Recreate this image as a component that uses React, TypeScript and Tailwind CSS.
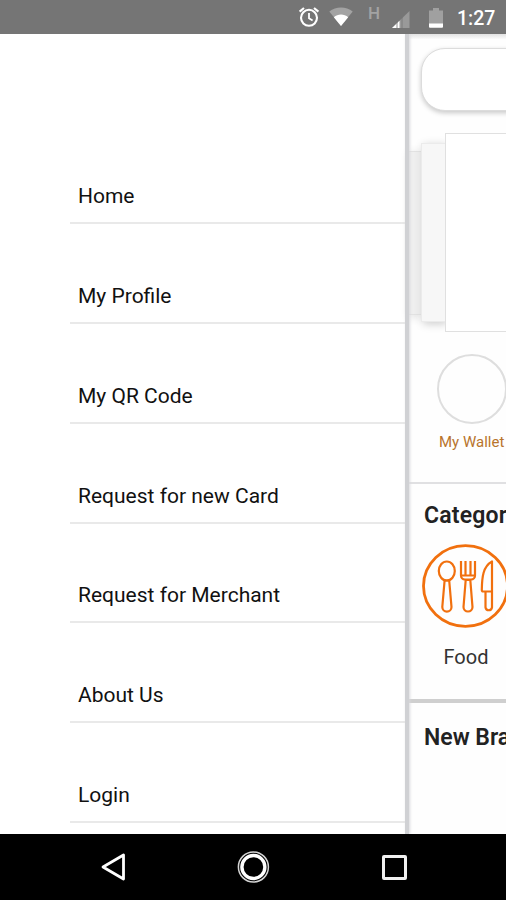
const menuItems = [
  'Home',
  'My Profile',
  'My QR Code',
  'Request for new Card',
  'Request for Merchant',
  'About Us',
  'Login',
];

function StatusBar() {
  return (
    <header className="flex h-[34px] shrink-0 items-center bg-[#757575] pl-[298px]">
      {/* alarm */}
      <svg width="22" height="22" viewBox="0 0 22 22" fill="none" stroke="#fff" className="shrink-0">
        <circle cx="11" cy="11.8" r="8" strokeWidth="2.1" />
        <path d="M11 7v5.3l3.6 2.2" strokeWidth="1.8" />
        <path d="M1.6 5.6 6 2M20.4 5.6 16 2" strokeWidth="2.2" />
      </svg>
      {/* wifi */}
      <svg width="24" height="20" viewBox="0 0 24 20" className="ml-[9px] shrink-0">
        <path d="M.3 4.6C3.7 1.9 7.7.6 12 .6s8.300 1.300 11.700 4L12 19z" fill="#a3a3a3" />
        <path d="M4.800 10.200C6.900 8.500 9.300 7.600 12 7.600s5.100.9 7.200 2.600L12 19z" fill="#fff" />
      </svg>
      <span className="-mt-[8px] ml-[15px] w-[14px] shrink-0 text-[17px] leading-none font-medium text-[#a3a3a3]">H</span>
      {/* mobile signal */}
      <svg width="18" height="18" viewBox="0 0 18 18" className="mt-[5px] ml-[10px] shrink-0">
        <path d="M0 17 17.500 0v17z" fill="#999" />
        <path d="M0 17 7.500 9.700V17z" fill="#fff" />
        <path d="M5 10v8M10 6v12" stroke="#757575" strokeWidth=".8" />
      </svg>
      {/* battery */}
      <svg width="16" height="20" viewBox="0 0 16 20" className="mt-[1px] ml-[18px] shrink-0">
        <path d="M1 2.500h4V0h6v2.500h4V16H1z" fill="#a0a0a0" />
        <path d="M1 15.500h14v3.300a1 1 0 0 1-1 1H2a1 1 0 0 1-1-1z" fill="#fff" />
      </svg>
      <span className="mt-[3px] ml-[13px] text-[19.500px] leading-none font-medium text-white">1:27</span>
    </header>
  );
}

function Drawer() {
  return (
    <nav className="w-[405px] shrink-0 bg-white pt-[90.200px] pl-[70px]">
      <ul>
        {menuItems.map((item) => (
          <li
            key={item}
            className="flex h-[99.85px] items-end border-b-2 border-[#e9e9e9] pb-[14px] pl-2 text-[21px] leading-[24px] text-[#111]"
          >
            {item}
          </li>
        ))}
      </ul>
    </nav>
  );
}

function FoodIcon() {
  return (
    <svg width="86" height="84" viewBox="0 0 86 84" fill="none" stroke="#f1700e" strokeWidth="2.200" strokeLinejoin="round" className="shrink-0">
      <ellipse cx="43.500" cy="42" rx="42" ry="40.300" strokeWidth="2.800" />
      {/* spoon */}
      <ellipse cx="24.800" cy="27" rx="8" ry="9.500" />
      <path d="M22.600 36.500h4.600l2.300 26.500a4.500 4.500 0 0 1-9.200 0z" />
      {/* fork */}
      <path d="M39 17v14.500c0 2 1.500 4 4 4h6c2.500 0 4-2 4-4V17M43.500 17v14M48.500 17v14M39 31.500h14" />
      <path d="M43.700 36h4.600l2.200 27a4.500 4.500 0 0 1-9 0z" />
      {/* knife */}
      <path d="M70 17.500v46a3.300 3.300 0 0 1-6.500 0V47.500h-2.500c-.8 0-1.200-.7-1.200-1.700C60 33 61 22.500 70 17.500zM63.500 47.500H70" />
    </svg>
  );
}

function HomePanel() {
  return (
    <main className="flex w-[220px] shrink-0 flex-col bg-[#fefefe]">
      <div className="h-[5px] shrink-0 bg-gradient-to-b from-[#e2e2e2] to-[#fbfbfb]" />
      <div className="mt-[9px] ml-[12px] h-[63px] shrink-0 rounded-[24px] border border-[#dcdcdc] bg-white shadow-[0_2px_5px_#c8c8c8]" />

      {/* banner stack */}
      <div className="mt-[22px] flex h-[199px] shrink-0 items-center">
        <div className="h-[164px] w-[12px] border-y border-[#e2e2e2] bg-[#efefef] shadow-[0_2px_10px_#dedede]" />
        <div className="h-[179px] w-[24px] border border-r-0 border-[#ebebeb] bg-[#f7f7f7] shadow-[2px_2px_9px_#cccccc]" />
        <div className="h-[199px] flex-1 border border-[#e0e0e0] bg-white" />
      </div>

      <section className="flex h-[152px] shrink-0 flex-col border-b-2 border-[#e0e0e2] pt-[22px] pl-[28px]">
        <div className="size-[70px] rounded-full border-2 border-[#dedede]" />
        <p className="mt-[8px] ml-[2px] text-[15px] leading-[20px] text-[#b8742c]">My Wallet</p>
      </section>

      <section className="flex h-[219px] shrink-0 flex-col border-b-4 border-[#cfcfcf] pl-[15px]">
        <h2 className="mt-[18px] text-[23px] leading-[28px] font-semibold tracking-[0.2px] text-[#222]">Categories</h2>
        <div className="mt-[14px] -ml-[2px] flex w-[86px] flex-col items-center">
          <FoodIcon />
          <span className="mt-[17px] ml-[2px] text-[20px] leading-[24px] text-[#333]">Food</span>
        </div>
      </section>

      <h2 className="mt-[21px] ml-[15px] text-[23px] leading-[28px] font-semibold text-[#222]">New Brands</h2>
    </main>
  );
}

function NavigationBar() {
  return (
    <footer className="flex h-[66px] shrink-0 items-center bg-black pl-[100px]">
      <svg width="26" height="28" viewBox="0 0 26 28" fill="none" className="shrink-0">
        <path d="M3 14 23.500 2v24z" stroke="#fff" strokeWidth="2.800" strokeLinejoin="round" />
      </svg>
      <svg width="34" height="34" viewBox="0 0 34 34" fill="none" className="ml-[110px] shrink-0">
        <circle cx="17.400" cy="17" r="15" stroke="#d5d5d5" strokeWidth="1.500" />
        <circle cx="17.400" cy="17" r="11.500" stroke="#fff" strokeWidth="3.400" />
      </svg>
      <div className="ml-[112px] size-[25px] shrink-0 rounded-[2px] border-3 border-[#f0f0f0]" />
    </footer>
  );
}

export default function App() {
  return (
    <div className="flex h-[900px] w-[506px] flex-col overflow-hidden bg-white font-[Roboto,sans-serif]">
      <StatusBar />
      <div className="flex h-[800px] shrink-0 overflow-hidden">
        <Drawer />
        <div className="z-10 w-[4px] shrink-0 bg-[#d0d1d4] shadow-[1px_0_3px_#d8d8dc]" />
        <HomePanel />
      </div>
      <NavigationBar />
    </div>
  );
}
